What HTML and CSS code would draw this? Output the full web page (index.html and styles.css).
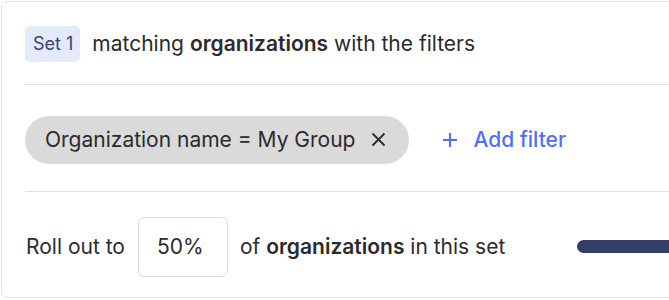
FILE: index.html
```html
<!DOCTYPE html>
<html lang="en">
<head>
    <meta charset="UTF-8">
    <title>Rollout set</title>
    <link rel="stylesheet" href="styles.css">
</head>
<body>
    <div class="card">
        <div class="section header-row">
            <span class="badge">Set 1</span>
            <span class="title">matching <strong>organizations</strong> with the filters</span>
        </div>

        <div class="section filter-row">
            <div class="chip">
                <span>Organization name = My Group</span>
                <svg class="chip-close" width="15" height="15" viewBox="0 0 15 15">
                    <path d="M1.5 1.5 L13.5 13.5 M13.5 1.5 L1.5 13.5" stroke="#2b2b2b" stroke-width="1.8" fill="none"/>
                </svg>
            </div>
            <button class="add-filter">
                <svg width="16" height="16" viewBox="0 0 16 16">
                    <path d="M8 1 V15 M1 8 H15" stroke="currentColor" stroke-width="2" fill="none"/>
                </svg>
                <span>Add filter</span>
            </button>
        </div>

        <div class="section rollout-row">
            <span>Roll out to</span>
            <input class="percent" type="text" value="50%">
            <span>of <strong>organizations</strong> in this set</span>
            <div class="slider">
                <div class="slider-fill"></div>
            </div>
        </div>
    </div>
</body>
</html>
```

FILE: styles.css
```css
* {
    margin: 0;
    padding: 0;
    box-sizing: border-box;
}

body {
    font-family: Inter, 'Noto Sans', sans-serif;
    color: #2b2b2b;
    background: #fff;
    overflow: hidden;
}

.card {
    margin: 1px 0 0 1px;
    width: 760px;
    height: 297px;
    border: 1px solid #e4e4e4;
    border-radius: 6px;
    background: #fff;
}

.section {
    display: flex;
    align-items: center;
    margin-left: 23px;
}

.header-row {
    height: 83px;
    border-bottom: 1px solid #e2e2e2;
    padding-top: 1px;
}

.badge {
    display: inline-flex;
    align-items: center;
    height: 36px;
    padding: 0 7px 0 8px;
    border-radius: 5px;
    background: #e4e9fc;
    color: #39466f;
    font-size: 18px;
}

.title {
    margin-left: 12px;
    font-size: 21px;
}

.title strong,
.rollout-row strong {
    font-weight: 600;
}

.filter-row {
    height: 107px;
    border-bottom: 1px solid #e2e2e2;
    padding-top: 3px;
}

.chip {
    display: flex;
    align-items: center;
    gap: 16px;
    height: 48px;
    padding: 0 23px 0 20px;
    border-radius: 24px;
    background: #dadada;
    font-size: 21px;
}

.chip-close {
    display: block;
}

.add-filter {
    display: flex;
    align-items: center;
    gap: 15px;
    margin-left: 33px;
    border: none;
    background: none;
    color: #4f70f3;
    font-family: inherit;
    font-size: 21px;
    font-weight: 500;
    cursor: pointer;
}

.rollout-row {
    height: 105px;
    margin-left: 24px;
    padding-top: 4px;
    font-size: 21px;
}

.percent {
    width: 90px;
    height: 60px;
    margin: 0 12px 0 13px;
    padding-left: 18px;
    border: 1px solid #dcdcdc;
    border-radius: 6px;
    font-family: inherit;
    font-size: 21px;
    color: #2b2b2b;
    outline: none;
}

.slider {
    margin-left: 72px;
    flex: 1;
}

.slider-fill {
    height: 13px;
    border-radius: 7px 0 0 7px;
    background: #333f69;
}
```
